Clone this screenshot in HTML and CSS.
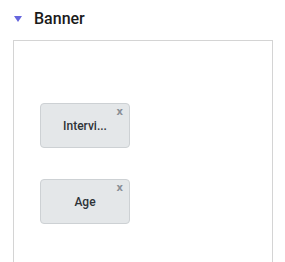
FILE: index.html
```html
<!DOCTYPE html>
<html lang="en">
<head>
    <meta charset="UTF-8">
    <meta name="viewport" content="width=device-width, initial-scale=1.0">
    <title>Banner</title>
    <link rel="stylesheet" href="styles.css">
</head>
<body>
<div class="section">
    <div class="section-header">
        <span class="caret"></span>
        <span class="section-title">Banner</span>
    </div>
    <div class="banner-box">
        <div class="chip">
            <span class="chip-label">Intervi...</span>
            <span class="chip-close">x</span>
        </div>
        <div class="chip">
            <span class="chip-label">Age</span>
            <span class="chip-close">x</span>
        </div>
    </div>
</div>
</body>
</html>
```
FILE: styles.css
```css
body {
    margin: 0;
    padding: 0;
    background-color: #fff;
    font-family: Roboto, "Liberation Sans", sans-serif;
    overflow: hidden;
}
.section {
    padding: 0 12px 0 13px;
}
.section-header {
    display: flex;
    align-items: center;
    height: 36px;
    padding-left: 1px;
}
.caret {
    width: 0;
    height: 0;
    border-left: 4.5px solid transparent;
    border-right: 4.5px solid transparent;
    border-top: 6px solid #6666dd;
    margin-top: 1px;
}
.section-title {
    margin-left: 12px;
    font-size: 16px;
    font-weight: 500;
    color: #1a1a1a;
}
.banner-box {
    margin-top: 4px;
    width: 260px;
    height: 222px;
    border: 1px solid #d4d4d4;
    border-bottom: none;
    padding: 62px 0 0 26px;
    box-sizing: border-box;
    display: flex;
    flex-direction: column;
    gap: 31px;
}
.chip {
    position: relative;
    width: 90px;
    height: 45px;
    box-sizing: border-box;
    background-color: #e4e7e9;
    border: 1px solid #cdd1d4;
    border-radius: 4px;
    display: flex;
    align-items: center;
    justify-content: center;
}
.chip-label {
    font-size: 12px;
    font-weight: 500;
    color: #2e3338;
    margin-top: 1px;
}
.chip-close {
    position: absolute;
    top: 2px;
    right: 6px;
    font-family: "DejaVu Sans", sans-serif;
    font-size: 10px;
    font-weight: bold;
    color: #8a8f96;
}
```
